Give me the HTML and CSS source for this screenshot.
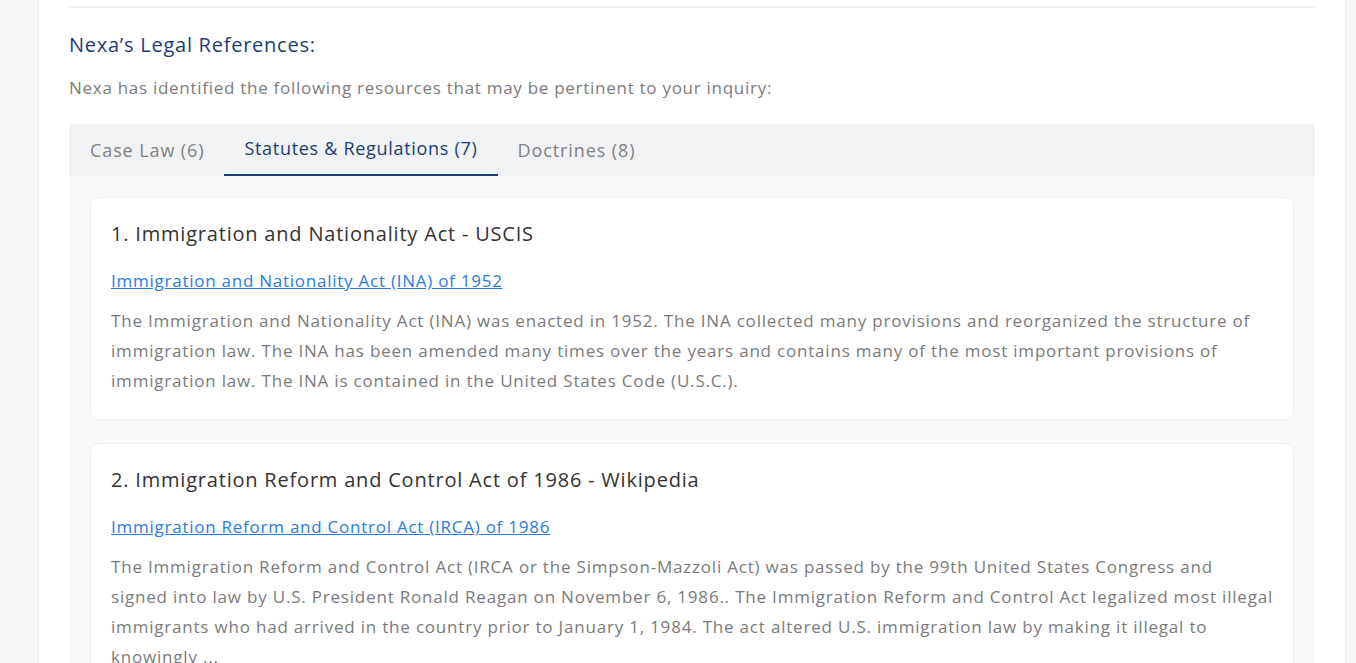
FILE: index.html
```html
<!DOCTYPE html>
<html lang="en">
<head>
<meta charset="utf-8">
<title>Nexa's Legal References</title>
<link rel="stylesheet" href="styles.css">
</head>
<body>
<div class="page">
  <main class="sheet">
    <div class="rule"></div>
    <h2 class="heading">Nexa’s Legal References:</h2>
    <p class="intro">Nexa has identified the following resources that may be pertinent to your inquiry:</p>
    <section class="tabs">
      <nav class="tab-bar">
        <span class="tab">Case Law (6)</span>
        <span class="tab active">Statutes &amp; Regulations (7)</span>
        <span class="tab">Doctrines (8)</span>
      </nav>
      <div class="panel">
        <article class="ref">
          <h3 class="ref-title">1. Immigration and Nationality Act - USCIS</h3>
          <a class="ref-link" href="#">Immigration and Nationality Act (INA) of 1952</a>
          <p class="ref-text">The Immigration and Nationality Act (INA) was enacted in 1952. The INA collected many provisions and reorganized the structure of immigration law. The INA has been amended many times over the years and contains many of the most important provisions of immigration law. The INA is contained in the United States Code (U.S.C.).</p>
        </article>
        <article class="ref">
          <h3 class="ref-title">2. Immigration Reform and Control Act of 1986 - Wikipedia</h3>
          <a class="ref-link" href="#">Immigration Reform and Control Act (IRCA) of 1986</a>
          <p class="ref-text">The Immigration Reform and Control Act (IRCA or the Simpson-Mazzoli Act) was passed by the 99th United States Congress and signed into law by U.S. President Ronald Reagan on November 6, 1986.. The Immigration Reform and Control Act legalized most illegal immigrants who had arrived in the country prior to January 1, 1984. The act altered U.S. immigration law by making it illegal to knowingly ...</p>
        </article>
      </div>
    </section>
  </main>
</div>
</body>
</html>
```
FILE: styles.css
```css
html, body {
  margin: 0;
  padding: 0;
  height: 100%;
  overflow: hidden;
}
body {
  background: #f6f7f9;
  font-family: "Open Sans", "DejaVu Sans", sans-serif;
}
.page {
  padding: 0 10px 0 38px;
  height: 100%;
}
.sheet {
  background: #ffffff;
  border-left: 1px solid #ebedf0;
  border-right: 1px solid #ebedf0;
  height: 100%;
  box-sizing: border-box;
  padding: 6px 30px 0 30px;
  width: 1308px;
}
.rule {
  height: 2px;
  background: #eff0f2;
}
.heading {
  margin: 22px 0 0 0;
  font-size: 20px;
  line-height: 30px;
  font-weight: 500;
  letter-spacing: 0.75px;
  color: #1b3e72;
}
.intro {
  margin: 15px 0 0 0;
  font-size: 17px;
  line-height: 26px;
  letter-spacing: 0.72px;
  color: #7c7c7c;
}
.tabs {
  margin-top: 23px;
}
.tab-bar {
  display: flex;
  background: #f1f2f3;
  height: 52px;
  padding-left: 1px;
}
.tab {
  padding: 0 20px;
  font-size: 18px;
  line-height: 52px;
  letter-spacing: 0.9px;
  color: #818181;
  box-sizing: border-box;
}
.tab.active {
  color: #1b3e72;
  font-weight: 500;
  letter-spacing: 0.7px;
  border-bottom: 2px solid #1b3e72;
  line-height: 48px;
  height: 52px;
}
.panel {
  background: #f8f9fb;
  padding: 21px 21px 0 21px;
  display: flex;
  flex-direction: column;
  gap: 23px;
}
.ref {
  background: #ffffff;
  border: 1px solid #eff0f2;
  border-radius: 8px;
  padding: 19px 19px 23px 20px;
}
.ref-title {
  margin: 0;
  font-size: 20px;
  line-height: 34px;
  font-weight: 500;
  letter-spacing: 0.8px;
  color: #333333;
}
.ref-link {
  display: block;
  margin-top: 15px;
  font-size: 17px;
  line-height: 30px;
  letter-spacing: 0.75px;
  color: #2b7ce0;
  text-decoration: underline;
}
.ref-text {
  margin: 10px 0 0 0;
  font-size: 17px;
  line-height: 30px;
  letter-spacing: 0.8px;
  color: #7b7b7b;
}
```
